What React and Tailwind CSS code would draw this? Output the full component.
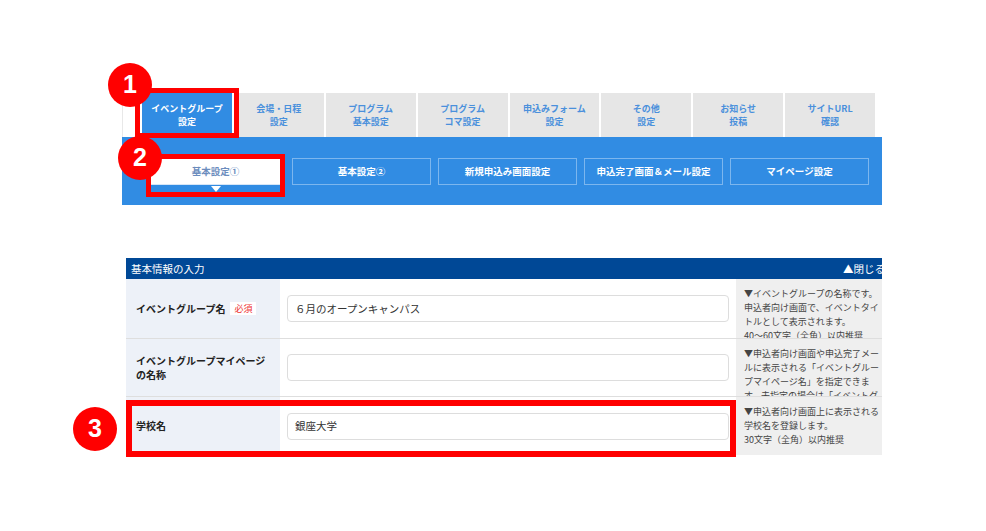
import React from "react";

const FONT = { fontFamily: '"Noto Sans CJK JP", "Noto Sans", sans-serif' };

const TABS = [
  ["イベントグループ", "設定"],
  ["会場・日程", "設定"],
  ["プログラム", "基本設定"],
  ["プログラム", "コマ設定"],
  ["申込みフォーム", "設定"],
  ["その他", "設定"],
  ["お知らせ", "投稿"],
  ["サイトURL", "確認"],
];

const SUBTABS = ["基本設定①", "基本設定②", "新規申込み画面設定", "申込完了画面＆メール設定", "マイページ設定"];

function Badge({ n, className }) {
  return (
    <div
      className={`absolute w-[44px] h-[44px] rounded-full bg-[#ff0000] flex items-center justify-center text-white text-[25px] font-bold ${className}`}
      style={{ fontFamily: '"Liberation Sans", Arial, sans-serif' }}
    >
      {n}
    </div>
  );
}

function Row({ label, required, value, help, h, last }) {
  return (
    <div className={`flex ${last ? "" : "border-b border-[#dedede]"} ${h}`}>
      <div className="w-[154px] shrink-0 bg-[#edf1f8] pl-[10px] flex items-center">
        <span className="text-[10px] font-bold leading-[14px] text-[#222]">{label}</span>
        {required && (
          <span className="ml-[5px] bg-white px-[4px] text-[9px] leading-[13px] text-[#ee3333]">必須</span>
        )}
      </div>
      <div className="w-[456px] shrink-0 bg-white px-[7px] flex items-center">
        <div className="w-full h-[27px] rounded-[4px] border border-[#dddddd] flex items-center px-[7px] text-[10.5px] text-[#333]">
          {value}
        </div>
      </div>
      <div className="w-[150px] shrink-0 bg-[#efefef] pl-[8px] pr-[2px] pt-[8px] overflow-hidden text-[9px] leading-[14px] text-[#444]">
        {help}
      </div>
    </div>
  );
}

export default function App() {
  return (
    <div className="relative w-[986px] h-[531px] bg-white overflow-hidden" style={FONT}>
      <div className="pt-[93px] pl-[122px]">
        <div className="w-[760px] h-[44px] border-l border-[#e8e8e8] pl-[19px]">
          <div className="grid grid-cols-8 gap-[2px] w-[733px] h-full">
            {TABS.map(([a, b], i) => (
              <div
                key={i}
                className={`flex flex-col items-center justify-center text-[9px] font-bold leading-[13px] ${
                  i === 0 ? "bg-[#318ce3] text-white" : "bg-[#e6e6e6] text-[#4a90dc]"
                }`}
              >
                <span>{a}</span>
                <span>{b}</span>
              </div>
            ))}
          </div>
        </div>
        <div className="w-[760px] h-[68px] bg-[#318ce3] pt-[21px] pl-[24px] flex gap-[7px]">
          {SUBTABS.map((t, i) => (
            <div key={i} className="relative w-[139px] h-[27px]">
              <div
                className={`h-full flex items-center justify-center text-[9.5px] font-bold border ${
                  i === 0 ? "bg-white border-[#d6e6f7] text-[#6b8cbd]" : "border-[#7cb6ee] text-white"
                }`}
              >
                {t}
              </div>
              {i === 0 && (
                <div className="absolute left-1/2 -translate-x-1/2 top-[28px] w-0 h-0 border-l-[5px] border-r-[5px] border-t-[6px] border-l-transparent border-r-transparent border-t-white" />
              )}
            </div>
          ))}
        </div>
      </div>

      <div className="mt-[53px] ml-[126px] w-[756px] overflow-hidden">
        <div className="w-[760px] h-[21px] bg-[#004896] flex items-center justify-between pl-[5px] text-white text-[10.5px]">
          <span>基本情報の入力</span>
          <span className="mr-[1px]">▲閉じる</span>
        </div>
        <Row
          label="イベントグループ名"
          required
          value="６月のオープンキャンパス"
          h="h-[60px]"
          help={
            <>
              ▼イベントグループの名称です。
              <br />
              申込者向け画面で、イベントタイトルとして表示されます。
              <br />
              40〜60文字（全角）以内推奨
            </>
          }
        />
        <Row
          label={
            <>
              イベントグループマイページ
              <br />
              の名称
            </>
          }
          value=""
          h="h-[58px]"
          help="▼申込者向け画面や申込完了メールに表示される「イベントグループマイページ名」を指定できます。未指定の場合は「イベントグループ名」が表示されます。"
        />
        <Row
          label="学校名"
          value="銀座大学"
          h="h-[58px]"
          last
          help={
            <>
              ▼申込者向け画面上に表示される学校名を登録します。
              <br />
              30文字（全角）以内推奨
            </>
          }
        />
      </div>

      {/* annotations */}
      <div className="absolute left-[135px] top-[88px] w-[104px] h-[50px] border-[5px] border-[#ff0000]" />
      <div className="absolute left-[146px] top-[154px] w-[139px] h-[43px] border-[5px] border-[#ff0000]" />
      <div className="absolute left-[126px] top-[400px] w-[610px] h-[57px] border-[6px] border-[#ff0000]" />
      <Badge n="1" className="left-[108px] top-[63px]" />
      <Badge n="2" className="left-[118px] top-[136px]" />
      <Badge n="3" className="left-[73px] top-[407px]" />
    </div>
  );
}
